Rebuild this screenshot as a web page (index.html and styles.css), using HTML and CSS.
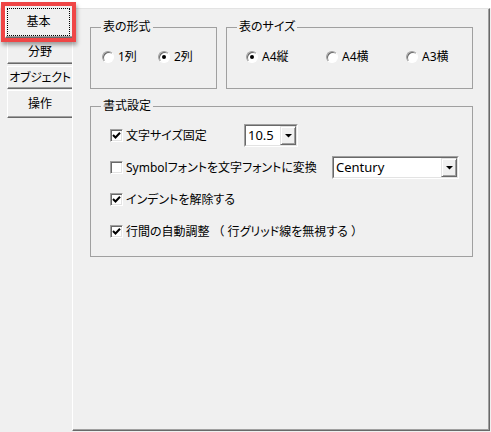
FILE: index.html
```html
<!DOCTYPE html>
<html lang="ja">
<head>
<meta charset="utf-8">
<title>設定</title>
<link rel="stylesheet" href="styles.css">
</head>
<body>
<div class="root">
  <nav class="tabs">
    <div class="tab sel"><span class="focus">基本</span></div>
    <div class="tab t2">分野</div>
    <div class="tab t3">オブジェクト</div>
    <div class="tab t4">操作</div>
  </nav>
  <section class="panel">
    <div class="row-top">
      <fieldset class="grp g1">
        <legend>表の形式</legend>
        <div class="opts o1">
          <label class="opt"><span class="radio"></span>1列</label>
          <label class="opt"><span class="radio"><span class="dot"></span></span>2列</label>
        </div>
      </fieldset>
      <fieldset class="grp g2">
        <legend>表のサイズ</legend>
        <div class="opts o2">
          <label class="opt"><span class="radio"><span class="dot"></span></span>A4縦</label>
          <label class="opt"><span class="radio"></span>A4横</label>
          <label class="opt"><span class="radio"></span>A3横</label>
        </div>
      </fieldset>
    </div>
    <fieldset class="grp g3">
      <legend>書式設定</legend>
      <div class="rows">
        <div class="crow c1">
          <label class="chk-label"><span class="cb"><svg width="9" height="9" viewBox="0 0 9 9"><polyline points="1,4 3.5,6.5 8,1.8" fill="none" stroke="#000" stroke-width="2"/></svg></span>文字サイズ固定</label>
          <div class="combo cw1"><div class="combo-in"><span class="combo-val">10.5</span><span class="combo-btn"><svg width="7" height="4" viewBox="0 0 7 4"><polygon points="0,0 7,0 3.5,3.6" fill="#000"/></svg></span></div></div>
        </div>
        <div class="crow c2">
          <label class="chk-label"><span class="cb"></span>Symbolフォントを文字フォントに変換</label>
          <div class="combo cw2"><div class="combo-in"><span class="combo-val">Century</span><span class="combo-btn"><svg width="7" height="4" viewBox="0 0 7 4"><polygon points="0,0 7,0 3.5,3.6" fill="#000"/></svg></span></div></div>
        </div>
        <div class="crow">
          <label class="chk-label"><span class="cb"><svg width="9" height="9" viewBox="0 0 9 9"><polyline points="1,4 3.5,6.5 8,1.8" fill="none" stroke="#000" stroke-width="2"/></svg></span>インデントを解除する</label>
        </div>
        <div class="crow">
          <label class="chk-label"><span class="cb"><svg width="9" height="9" viewBox="0 0 9 9"><polyline points="1,4 3.5,6.5 8,1.8" fill="none" stroke="#000" stroke-width="2"/></svg></span>行間の自動調整<span class="fw">（</span>行グリッド線を無視する<span class="fw">）</span></label>
        </div>
      </div>
    </fieldset>
  </section>
  <div class="hl"></div>
</div>
</body>
</html>
```
FILE: styles.css
```css
html, body {
  margin: 0;
  padding: 0;
}
body {
  width: 491px;
  height: 432px;
  overflow: hidden;
  background: linear-gradient(#fff 0 8px, #f0f0f0 8px);
  font-family: "Noto Sans", "Noto Sans CJK JP", sans-serif;
  font-size: 12px;
  color: #000;
  font-feature-settings: "palt";
}
.root {
  position: relative;
  display: flex;
  height: 432px;
}

/* left vertical tabs */
.tabs {
  width: 72px;
  flex: none;
  box-sizing: border-box;
  padding-top: 6px;
  display: flex;
  flex-direction: column;
  align-items: flex-end;
}
.tab {
  box-sizing: border-box;
  width: 65px;
  display: flex;
  align-items: center;
  justify-content: center;
  background: #f0f0f0;
  border-left: 1px solid #fff;
  border-top: 1px solid #fff;
  border-bottom: 1px solid #696969;
  box-shadow: inset 0 -1px 0 #a0a0a0;
  line-height: 14px;
  white-space: nowrap;
}
.tab.sel {
  width: 67px;
  height: 32px;
  padding: 1px 2px 1px 1px;
  align-items: stretch;
  border-top: 1px solid #f0f0f0;
}
.focus {
  flex: 1;
  border: 1px dotted #000;
  display: flex;
  align-items: center;
  justify-content: center;
}
.t2 { margin-top: 2px; height: 24px; }
.t3 { margin-top: 2px; height: 23px; letter-spacing: -0.3px; }
.t4 { margin-top: 1px; height: 28px; }

/* tab page */
.panel {
  flex: none;
  width: 418px;
  height: 423px;
  margin-top: 8px;
  box-sizing: border-box;
  border-left: 1px solid #fff;
  border-top: 1px solid #e3e3e3;
  border-right: 1px solid #696969;
  border-bottom: 1px solid #696969;
  box-shadow: inset -1px -1px 0 #a0a0a0;
  padding: 10px 0 0 17px;
}
.row-top {
  display: flex;
  gap: 9px;
}
fieldset.grp {
  margin: 0;
  padding: 0;
  min-width: 0;
  box-sizing: border-box;
  border: 1px solid #a0a0a0;
}
legend {
  margin-left: 10px;
  padding: 0 2px;
  line-height: 16px;
  font-size: 12px;
}
fieldset.g1 { width: 127px; }
fieldset.g2 { width: 247px; }
fieldset.g3 { width: 383px; margin-top: 9px; }

.opts {
  display: flex;
  height: 16px;
  padding: 14px 0 23px 11px;
}
.o2 { padding-left: 19px; }
.opt {
  flex: none;
  display: flex;
  align-items: center;
  gap: 4px;
  line-height: 16px;
}
.o1 .opt { width: 56px; }
.o2 .opt { width: 80px; }

.radio {
  width: 12px;
  height: 12px;
  box-sizing: border-box;
  border-radius: 50%;
  background: #fff;
  border: 1px solid;
  border-color: #a0a0a0 #fff #fff #a0a0a0;
  box-shadow: inset 1px 1px 0 #696969;
  display: grid;
  place-items: center;
}
.dot {
  width: 4px;
  height: 4px;
  border-radius: 50%;
  background: #000;
}

.rows {
  display: flex;
  flex-direction: column;
  gap: 9px;
  padding: 10px 0 13px 19px;
}
.crow {
  display: flex;
  align-items: center;
  height: 23px;
}
.chk-label {
  flex: none;
  display: flex;
  align-items: center;
  gap: 3px;
  white-space: nowrap;
  line-height: 16px;
}
.fw { font-feature-settings: normal; }
.c1 .chk-label { width: 134px; }
.c2 .chk-label { width: 222px; }
.cb {
  width: 13px;
  height: 13px;
  box-sizing: border-box;
  background: #fff;
  border: 1px solid;
  border-color: #a0a0a0 #fff #fff #a0a0a0;
  box-shadow: inset 1px 1px 0 #696969, inset -1px -1px 0 #e3e3e3;
  display: grid;
  place-items: center;
}
.cb svg { display: block; }

.combo {
  flex: none;
  display: flex;
  box-sizing: border-box;
  height: 23px;
  border: 1px solid;
  border-color: #a0a0a0 #fff #fff #a0a0a0;
}
.cw1 { width: 54px; }
.cw2 { width: 127px; }
.combo-in {
  flex: 1;
  display: flex;
  border: 1px solid;
  border-color: #696969 #e3e3e3 #e3e3e3 #696969;
  background: #fff;
}
.combo-val {
  flex: 1;
  padding-left: 2px;
  font-size: 13px;
  line-height: 19px;
}
.combo-btn {
  width: 16px;
  box-sizing: border-box;
  background: #f0f0f0;
  border: 1px solid;
  border-color: #e3e3e3 #696969 #696969 #e3e3e3;
  box-shadow: inset 1px 1px 0 #fff, inset -1px -1px 0 #a0a0a0;
  display: grid;
  place-items: center;
}
.combo-btn svg { display: block; }

/* red annotation frame over the selected tab */
.hl {
  position: absolute;
  left: 1px;
  top: 2px;
  width: 75px;
  height: 40px;
  box-sizing: border-box;
  border: 4px solid #ef4646;
  box-shadow: 1px 3px 4px rgba(0, 0, 0, 0.35);
  pointer-events: none;
}
```
